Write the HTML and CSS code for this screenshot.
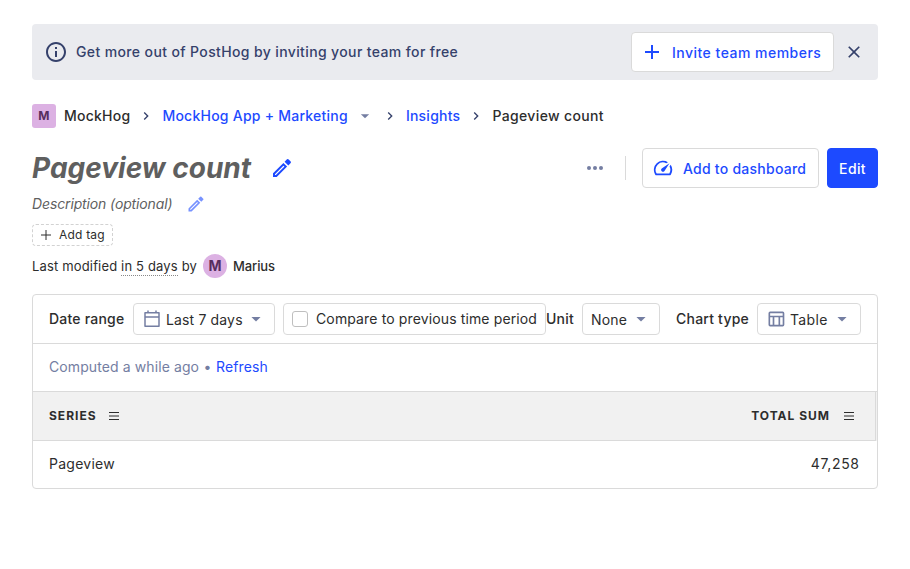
FILE: index.html
```html
<!DOCTYPE html>
<html lang="en">
<head>
<meta charset="utf-8">
<title>Pageview count</title>
<link rel="stylesheet" href="styles.css">
</head>
<body>
<svg class="defs" width="0" height="0">
  <symbol id="chevron" viewBox="0 0 24 24"><path d="M8.59 16.59 13.17 12 8.59 7.41 10 6l6 6-6 6z"/></symbol>
  <symbol id="caret" viewBox="0 0 24 24"><path d="m6.500 9.500 5.500 5.500 5.500-5.500z"/></symbol>
  <symbol id="pencil" viewBox="0 0 24 24"><path d="M4 17.700 13.400 8.300l2.300 2.300L6.300 20H4z" fill="none" stroke="currentColor" stroke-width="2"/><path d="m14.600 5.700 2.400-2.400q.7-.6 1.400 0l2.300 2.300q.6.700 0 1.400l-2.400 2.400z"/></symbol>
  <symbol id="plus" viewBox="0 0 24 24"><path d="M19 13h-6v6h-2v-6H5v-2h6V5h2v6h6z"/></symbol>
  <symbol id="lines" viewBox="0 0 12 12"><path d="M1 2.500h10M1 9.500h10M1 6h10" fill="none" stroke="currentColor"/></symbol>
</svg>
<main class="page">
  <section class="banner">
    <svg class="info" viewBox="0 0 24 24"><path d="M11 7h2v2h-2zm0 4h2v6h-2zm1-9C6.48 2 2 6.48 2 12s4.48 10 10 10 10-4.48 10-10S17.52 2 12 2zm0 18c-4.41 0-8-3.59-8-8s3.59-8 8-8 8 3.59 8 8-3.59 8-8 8z"/></svg>
    <span class="banner-text">Get more out of PostHog by inviting your team for free</span>
    <button class="btn invite"><svg viewBox="0 0 24 24"><use href="#plus"/></svg><span>Invite team members</span></button>
    <svg class="close" viewBox="0 0 24 24"><path d="M19 6.41 17.59 5 12 10.59 6.41 5 5 6.41 10.59 12 5 17.59 6.41 19 12 13.41 17.59 19 19 17.59 13.41 12z"/></svg>
  </section>

  <nav class="crumbs">
    <span class="lettermark">M</span>
    <span>MockHog</span>
    <svg class="sep"><use href="#chevron"/></svg>
    <a>MockHog App + Marketing</a>
    <svg class="crumb-caret"><use href="#caret"/></svg>
    <svg class="sep"><use href="#chevron"/></svg>
    <a>Insights</a>
    <svg class="sep"><use href="#chevron"/></svg>
    <span class="current">Pageview count</span>
  </nav>

  <header class="title-row">
    <h1>Pageview count</h1>
    <svg class="edit-title"><use href="#pencil"/></svg>
    <svg class="more" viewBox="0 0 24 24"><circle cx="6" cy="12" r="2"/><circle cx="12" cy="12" r="2"/><circle cx="18" cy="12" r="2"/></svg>
    <i class="divider"></i>
    <button class="btn dashboard"><svg viewBox="0 0 24 24"><path d="m20.38 8.57-1.23 1.85a8 8 0 0 1-.22 7.58H5.07A8 8 0 0 1 15.58 6.85l1.85-1.23A10 10 0 0 0 3.35 19a2 2 0 0 0 1.72 1h13.85a2 2 0 0 0 1.74-1 10 10 0 0 0-.27-10.44zm-9.79 6.84a2 2 0 0 0 2.83 0l5.66-8.49-8.49 5.66a2 2 0 0 0 0 2.83z"/></svg><span>Add to dashboard</span></button>
    <button class="btn primary">Edit</button>
  </header>

  <div class="description"><em>Description (optional)</em><svg><use href="#pencil"/></svg></div>
  <div class="tag"><svg viewBox="0 0 12 12"><path d="M6 1v10M1 6h10" fill="none" stroke="currentColor"/></svg><span>Add tag</span></div>
  <div class="modified"><span>Last modified <span class="when">in 5 days</span> by</span><span class="avatar">M</span><span class="author">Marius</span></div>

  <section class="card">
    <div class="filters">
      <span class="label range">Date range</span>
      <button class="select date"><svg viewBox="0 0 20 20"><path d="M3 3.750h14v13.500H3zM3 8h14M6 1.500v2.250M14 1.500v2.250" fill="none" stroke="currentColor" stroke-width="1.500" stroke-linejoin="round"/></svg><span>Last 7 days</span><svg class="caret"><use href="#caret"/></svg></button>
      <label class="compare"><i class="box"></i><span>Compare to previous time period</span></label>
      <span class="label unit">Unit</span>
      <button class="select none"><span>None</span><svg class="caret"><use href="#caret"/></svg></button>
      <span class="label chart">Chart type</span>
      <button class="select table"><svg viewBox="0 0 24 24"><path d="M20 3H5a2 2 0 0 0-2 2v14a2 2 0 0 0 2 2h15a2 2 0 0 0 2-2V5a2 2 0 0 0-2-2zm0 2v3H5V5h15zm-5 14h-5v-9h5v9zM5 10h3v9H5v-9zm12 9v-9h3v9h-3z"/></svg><span>Table</span><svg class="caret"><use href="#caret"/></svg></button>
    </div>
    <div class="computed"><span>Computed a while ago</span><span class="bullet">•</span><a>Refresh</a></div>
    <div class="thead">
      <span class="series">Series</span><svg><use href="#lines"/></svg>
      <span class="total">Total sum</span><svg><use href="#lines"/></svg>
    </div>
    <div class="trow"><span>Pageview</span><span class="value">47,258</span></div>
  </section>
</main>
</body>
</html>
```
FILE: styles.css
```css
* { box-sizing: border-box; }
body { margin: 0; background: #fff; color: #2d2d2d; font: 14px/20px Inter, "Liberation Sans", sans-serif; white-space: nowrap; }
svg { display: block; flex: none; fill: currentColor; }
.defs { position: absolute; }
a { color: #1d4aff; }
button { font: inherit; letter-spacing: inherit; color: inherit; margin: 0; }
.page { padding: 24px 32px; }

.banner { display: flex; align-items: center; height: 56px; padding: 0 12px; border-radius: 4px; background: #eaebef; color: #35416b; font-weight: 500; }
.info { width: 24px; height: 24px; margin-right: 8px; }
.banner-text { flex: 1; letter-spacing: .375px; }
.btn { display: flex; align-items: center; height: 40px; padding: 2px 12px 0; border: 1px solid #dadada; border-radius: 4px; background: #fff; color: #1d4aff; font-weight: 500; }
.btn svg { margin-top: -2px; }
.invite { width: 203px; padding-left: 8px; letter-spacing: .48px; }
.invite svg { width: 24px; height: 24px; margin-right: 8px; }
.close { width: 20px; height: 20px; margin: 0 2px 0 10px; }

.crumbs { display: flex; align-items: center; height: 24px; margin-top: 24px; font-weight: 500; letter-spacing: .24px; }
.lettermark { width: 24px; height: 24px; margin-right: 8px; border-radius: 3px; background: #dcb1e3; color: #572e5e; font-weight: 700; font-size: 12px; line-height: 24px; text-align: center; }
.sep { width: 16px; height: 16px; margin: 0 8px; color: #35416b; }
.crumb-caret { width: 18px; height: 18px; margin: 0 8px; color: #747ea2; }
.crumb-caret + .sep { margin-left: 0; }
.current { letter-spacing: .36px; }

.title-row { display: flex; align-items: center; height: 40px; margin-top: 20px; }
h1 { margin: 0; color: #5f5f5f; font-size: 28px; line-height: 40px; font-weight: 700; font-style: italic; }
.edit-title { width: 24px; height: 24px; margin-left: 19px; color: #1d4aff; }
.more { width: 24px; height: 24px; margin-left: auto; color: #747ea2; }
.divider { width: 1px; height: 24px; margin: 0 16px 0 18px; background: #dadada; }
.dashboard { width: 177px; padding-left: 9px; letter-spacing: .25px; }
.dashboard svg { width: 22px; height: 22px; margin-right: 9px; }
.primary { width: 51px; margin-left: 8px; padding: 2px 0 0; justify-content: center; background: #1d4aff; border-color: #1d4aff; color: #fff; letter-spacing: .35px; }

.description { display: flex; align-items: center; height: 24px; margin-top: 4px; color: #5f5f5f; letter-spacing: -.13px; }
.description svg { width: 20px; height: 20px; margin-left: 14px; color: #1d4aff; opacity: .6; }
.tag { display: flex; align-items: center; width: 81px; height: 22px; margin-top: 8px; padding-left: 7px; border: 1px dashed #d2d2d2; border-radius: 4px; font-size: 12px; letter-spacing: .2px; }
.tag svg { width: 12px; height: 12px; margin-right: 7px; }
.modified { display: flex; align-items: center; height: 24px; margin-top: 8px; font-size: 13px; letter-spacing: .16px; }
.when { display: inline-block; line-height: 17px; border-bottom: 1px dotted #888; }
.avatar { width: 24px; height: 24px; margin: 0 6px; border-radius: 50%; background: #dcb1e3; color: #572e5e; font-size: 14px; font-weight: 700; line-height: 24px; text-align: center; }
.author { font-weight: 500; letter-spacing: -.1px; }

.card { height: 195px; margin-top: 16px; border: 1px solid #dadada; border-radius: 4px; overflow: hidden; }
.filters { display: flex; align-items: center; height: 49px; padding: 0 16px; border-bottom: 1px solid #dadada; }
.label { font-weight: 500; letter-spacing: .22px; }
.range { width: 76px; }
.unit { width: 28px; }
.select { display: flex; align-items: center; height: 32px; margin-left: 8px; padding: 1px 8px 0; border: 1px solid #dadada; border-radius: 4px; background: #fff; letter-spacing: .15px; }
.select svg { width: 20px; height: 20px; margin: -1px 4px 0 0; color: #747ea2; }
.select .caret { width: 20px; height: 20px; margin: -1px 0 0 auto; }
.date { width: 142px; }
.none { width: 78px; }
.table { width: 104px; letter-spacing: .35px; }
.compare { display: flex; align-items: center; width: 263px; height: 32px; margin-left: 8px; padding-left: 8px; border: 1px solid #dadada; border-radius: 4px; letter-spacing: .13px; }
.box { width: 16px; height: 16px; margin-right: 8px; border: 1px solid #bfbfbf; border-radius: 3px; }
.chart { width: 73px; margin-left: 16px; }
.computed { display: flex; align-items: center; height: 48px; padding: 0 16px 2px; border-bottom: 1px solid #dadada; color: #747ea2; letter-spacing: .1px; }
.bullet { margin: 0 4.5px; }
.thead { display: flex; align-items: center; width: 843px; height: 49px; padding: 0 20px 0 16px; border-right: 1px solid #dadada; border-bottom: 1px solid #dadada; background: #f1f1f1; box-shadow: 2px 0 0 #f1f1f1; font-size: 12px; font-weight: 700; letter-spacing: 1px; text-transform: uppercase; }
.thead svg { width: 12px; height: 12px; margin-left: 11px; }
.total { margin: 0 2px 0 auto; }
.trow { display: flex; align-items: center; justify-content: space-between; height: 47px; padding: 0 18px 1px 16px; letter-spacing: .25px; }
.value { margin-right: -.65px; letter-spacing: .65px; }
```
